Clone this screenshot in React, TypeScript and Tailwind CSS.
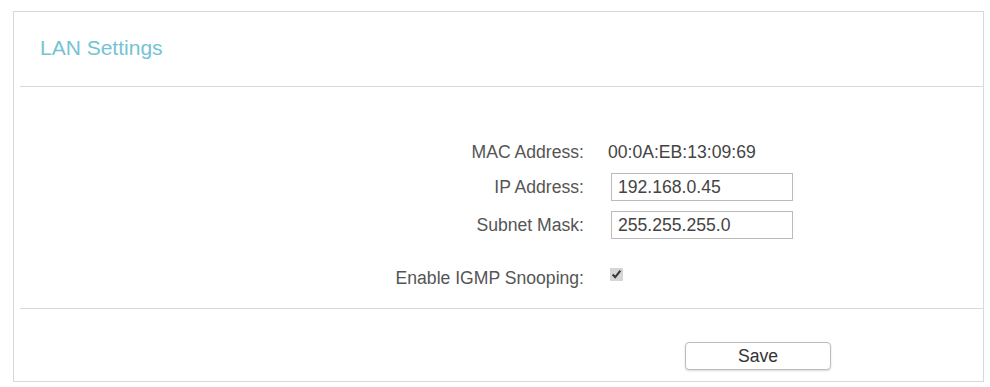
export default function App() {
  return (
    <div className="w-[990px] h-[387px] bg-white pt-[11px] pl-[13px] font-['Liberation_Sans',Arial,sans-serif]">
      <div className="w-[971px] h-[371px] border border-[#d8d8d8] flex flex-col">
        <div className="h-[74px] pl-[26px] pt-[23px]">
          <h1 className="text-[21px] leading-[26px] text-[#74c3d3]">LAN Settings</h1>
        </div>
        <div className="ml-[6px] h-[1px] bg-[#d8d8d8]" />

        <div className="flex flex-col pt-[52px] text-[17.6px] text-[#555]">
          <div className="flex items-center h-[26px]">
            <span className="w-[570px] text-right">MAC Address:</span>
            <span className="ml-[24px] text-[#444]">00:0A:EB:13:09:69</span>
          </div>
          <div className="flex items-center h-[28px] mt-[8px]">
            <span className="w-[570px] text-right">IP Address:</span>
            <input
              className="ml-[27px] w-[182px] h-[28px] border border-[#bbb] px-[6px] text-[17.6px] text-[#444] outline-none"
              defaultValue="192.168.0.45"
            />
          </div>
          <div className="flex items-center h-[28px] mt-[10px]">
            <span className="w-[570px] text-right">Subnet Mask:</span>
            <input
              className="ml-[27px] w-[182px] h-[28px] border border-[#bbb] px-[6px] text-[17.6px] text-[#444] outline-none"
              defaultValue="255.255.255.0"
            />
          </div>
          <div className="flex items-center h-[28px] mt-[21px]">
            <span className="w-[570px] text-right pt-[8px]">Enable IGMP Snooping:</span>
            <input type="checkbox" defaultChecked className="ml-[26px] w-[13px] h-[13px] accent-[#d6d6d6]" />
          </div>
        </div>

        <div className="ml-[6px] mt-[20px] h-[1px] bg-[#d8d8d8]" />

        <div className="flex pt-[33px] pl-[671px]">
          <button className="w-[146px] h-[28px] rounded-[4px] border border-[#bcbcbc] bg-white text-[17.6px] text-[#333] shadow-[0_1px_2px_rgba(0,0,0,0.15)]">
            Save
          </button>
        </div>
      </div>
    </div>
  );
}
